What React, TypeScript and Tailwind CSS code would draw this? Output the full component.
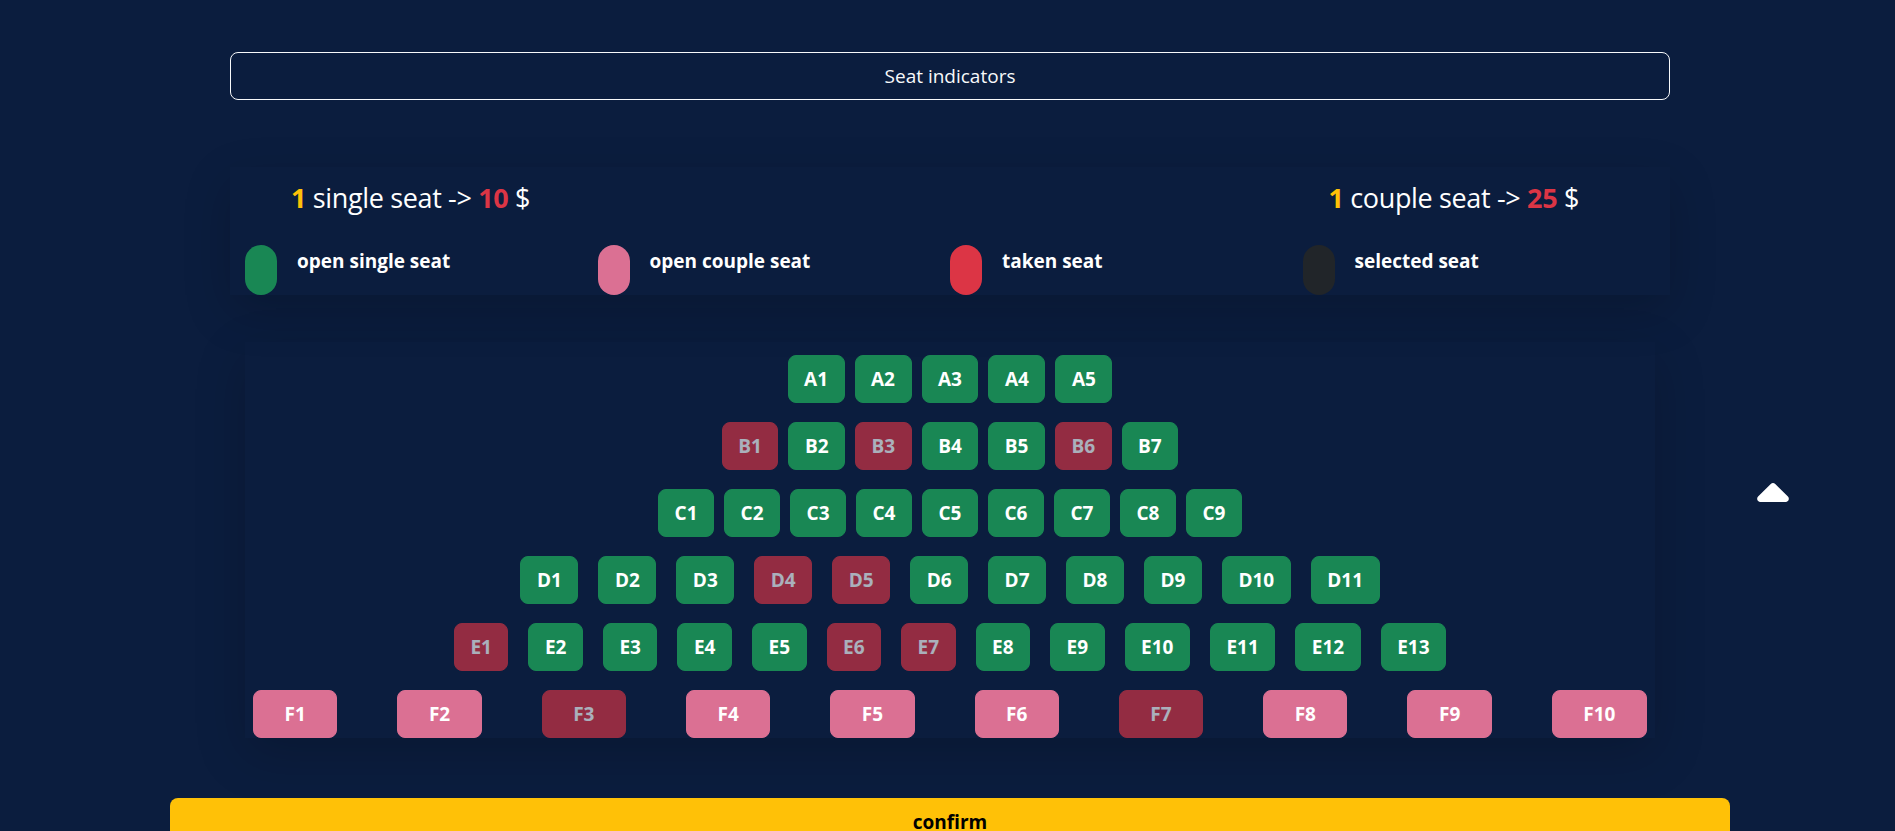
import React from "react";

type SeatKind = "o" | "t" | "c" | "ct";

const rows: { gap: string; seats: [string, SeatKind][] }[] = [
  {
    gap: "gap-[10px]",
    seats: [["A1", "o"], ["A2", "o"], ["A3", "o"], ["A4", "o"], ["A5", "o"]],
  },
  {
    gap: "gap-[10px]",
    seats: [["B1", "t"], ["B2", "o"], ["B3", "t"], ["B4", "o"], ["B5", "o"], ["B6", "t"], ["B7", "o"]],
  },
  {
    gap: "gap-[10px]",
    seats: [["C1", "o"], ["C2", "o"], ["C3", "o"], ["C4", "o"], ["C5", "o"], ["C6", "o"], ["C7", "o"], ["C8", "o"], ["C9", "o"]],
  },
  {
    gap: "gap-[20px]",
    seats: [["D1", "o"], ["D2", "o"], ["D3", "o"], ["D4", "t"], ["D5", "t"], ["D6", "o"], ["D7", "o"], ["D8", "o"], ["D9", "o"], ["D10", "o"], ["D11", "o"]],
  },
  {
    gap: "gap-[20px]",
    seats: [["E1", "t"], ["E2", "o"], ["E3", "o"], ["E4", "o"], ["E5", "o"], ["E6", "t"], ["E7", "t"], ["E8", "o"], ["E9", "o"], ["E10", "o"], ["E11", "o"], ["E12", "o"], ["E13", "o"]],
  },
  {
    gap: "gap-[60px]",
    seats: [["F1", "c"], ["F2", "c"], ["F3", "ct"], ["F4", "c"], ["F5", "c"], ["F6", "c"], ["F7", "ct"], ["F8", "c"], ["F9", "c"], ["F10", "c"]],
  },
];

const seatClass: Record<SeatKind, string> = {
  o: "px-[15.5px] bg-[#198754] border-[#198754]",
  t: "px-[15.5px] bg-[#dc3545] border-[#dc3545] opacity-[0.65]",
  c: "px-[30.5px] bg-[#db7093] border-[#db7093]",
  ct: "px-[30.5px] bg-[#dc3545] border-[#dc3545] opacity-[0.65]",
};

function Seat({ label, kind }: { label: string; kind: SeatKind }) {
  return (
    <button
      className={
        "h-[48px] rounded-lg border text-white text-[19px] font-bold leading-[30px] flex items-center justify-center " +
        seatClass[kind]
      }
    >
      {label}
    </button>
  );
}

const legend = [
  { color: "bg-[#198754]", label: "open single seat" },
  { color: "bg-[#db7093]", label: "open couple seat" },
  { color: "bg-[#dc3545]", label: "taken seat" },
  { color: "bg-[#212529]", label: "selected seat" },
];

export default function App() {
  return (
    <div className="relative min-h-screen bg-[#0b1d3e] pl-[5px] pb-[40px] text-white [font-family:'Open_Sans',sans-serif]">
      <div className="pt-[52px] flex flex-col items-center">
        <button className="w-[1440px] h-[48px] rounded-lg border border-[#f8f9fa] text-[#f8f9fa] text-[19px] leading-[30px]">
          Seat indicators
        </button>

        <div className="mt-[67px] w-[1440px] h-[128px] px-[15px] flex flex-col shadow-[0_16px_48px_rgba(0,0,0,0.175)]">
          <div className="flex pt-[14px]">
            <h3 className="ml-[46px] text-[27px] leading-[34px] tracking-[-0.35px]">
              <span className="font-bold text-[#ffc107]">1</span> single seat -&gt;{" "}
              <span className="font-bold text-[#dc3545]">10</span> $
            </h3>
            <h3 className="ml-auto mr-[76px] text-[27px] leading-[34px] tracking-[-0.35px]">
              <span className="font-bold text-[#ffc107]">1</span> couple seat -&gt;{" "}
              <span className="font-bold text-[#dc3545]">25</span> $
            </h3>
          </div>
          <div className="mt-auto grid grid-cols-4">
            {legend.map((l) => (
              <div key={l.label} className="flex items-start">
                <div className={"w-[32px] h-[50px] rounded-full " + l.color} />
                <div className="ml-[20px] mt-[4px] text-[19px] font-bold leading-[24px]">{l.label}</div>
              </div>
            ))}
          </div>
        </div>

        <div className="mt-[47px] w-[1410px] pt-[13px] flex flex-col gap-[19px] shadow-[0_16px_48px_rgba(0,0,0,0.175)]">
          {rows.map((r, i) => (
            <div key={i} className={"flex justify-center " + r.gap}>
              {r.seats.map(([label, kind]) => (
                <Seat key={label} label={label} kind={kind} />
              ))}
            </div>
          ))}
        </div>

        <button className="mt-[60px] w-[1560px] h-[48px] rounded-lg bg-[#ffc107] text-black text-[19px] font-bold leading-[30px]">
          confirm
        </button>
      </div>

      <button className="absolute left-[1757px] top-[483px] text-white" aria-label="scroll up">
        <svg width="32" height="19" viewBox="0 128 320 192" fill="currentColor">
          <path d="M182.6 137.4c-12.5-12.5-32.8-12.5-45.3 0l-128 128c-9.2 9.2-11.9 22.9-6.9 34.9s16.6 19.8 29.6 19.8H288c12.9 0 24.6-7.8 29.6-19.8s2.2-25.7-6.9-34.9l-128-128z" />
        </svg>
      </button>
    </div>
  );
}
